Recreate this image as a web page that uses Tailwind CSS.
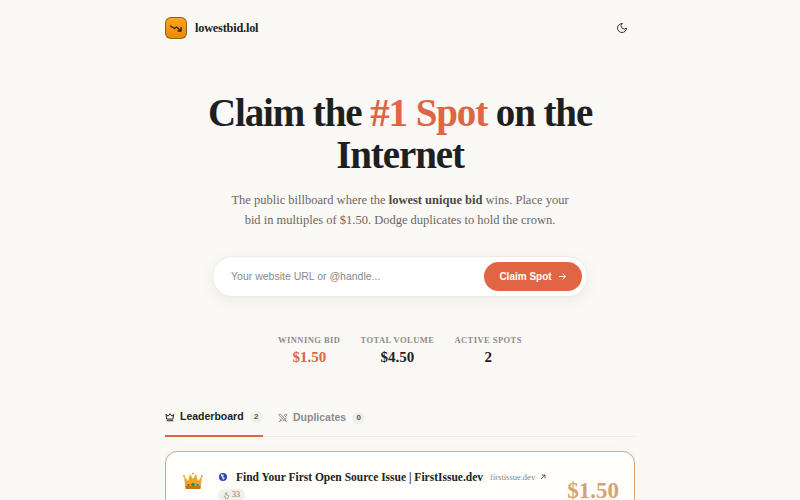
<!DOCTYPE html>
<html lang="en">
<head>
    <meta charset="UTF-8">
    <title>lowestbid.lol</title>
    <script src="https://cdn.jsdelivr.net/npm/@tailwindcss/browser@4"></script>
</head>
<body class="bg-[#faf9f6] font-['Liberation_Serif',serif] text-[#1f1f1f] h-[500px] overflow-hidden">
    <div class="w-[470px] mx-auto h-[500px] overflow-hidden">

        <!-- Header -->
        <header class="h-[55px] flex items-center justify-between">
            <div class="flex items-center gap-2">
                <div class="w-[22px] h-[22px] rounded-[6px] bg-gradient-to-b from-[#f8a51c] to-[#e98a0b] border border-[#3a2a10]/50 flex items-center justify-center">
                    <svg class="w-[16px] h-[16px]" viewBox="0 0 16 16" fill="none" stroke="#3a2508" stroke-width="1.4" stroke-linecap="round" stroke-linejoin="round"><path d="M2.5 6l4 2.500 2-1.500 4 3.500"/><path d="M13 7.500V11h-3"/></svg>
                </div>
                <span class="text-[12.3px] leading-[16px] font-bold tracking-[-0.2px] text-[#222]">lowestbid.lol</span>
            </div>
            <button class="mr-[7px] text-[#333]">
                <svg class="w-[12px] h-[12px]" viewBox="0 0 24 24" fill="none" stroke="currentColor" stroke-width="2" stroke-linecap="round" stroke-linejoin="round"><path d="M12 3a6 6 0 0 0 9 9 9 9 0 1 1-9-9Z"/></svg>
            </button>
        </header>

        <!-- Hero -->
        <section class="text-center">
            <h1 class="mt-[37px] -mx-[20px] text-[39px] leading-[42px] font-bold tracking-[-1.1px] text-[#1f1f1f]">Claim the <span class="text-[#e06545]">#1 Spot</span> on the Internet</h1>
            <p class="mt-[14px] text-[12.5px] leading-[20px] text-[#6b6660]">The public billboard where the <b class="text-[#4c4843]">lowest unique bid</b> wins. Place your<br>bid in multiples of $1.50. Dodge duplicates to hold the crown.</p>
        </section>

        <!-- Input -->
        <div class="mt-[26px] mx-[47px] h-[41px] rounded-full bg-white border border-[#eeeae4] shadow-[0_4px_14px_rgba(60,50,30,0.07)] flex items-center justify-between pl-[18px] pr-[5px] font-['Liberation_Sans',sans-serif]">
            <span class="text-[10.5px] text-[#8a8a8a]">Your website URL or @handle...</span>
            <button class="h-[29px] w-[98px] rounded-full bg-[#e06545] text-white text-[10px] font-bold flex items-center justify-center gap-[6px]">
                Claim Spot
                <svg class="w-[9px] h-[9px]" viewBox="0 0 24 24" fill="none" stroke="currentColor" stroke-width="2.500" stroke-linecap="round" stroke-linejoin="round"><path d="M4 12h16"/><path d="M13 5l7 7-7 7"/></svg>
            </button>
        </div>

        <!-- Stats -->
        <div class="mt-[37px] flex justify-center gap-[20px] text-center">
            <div>
                <div class="text-[8.5px] leading-[12px] font-bold tracking-[0.45px] text-[#8f8b85]">WINNING BID</div>
                <div class="mt-[2px] text-[15px] leading-[18px] font-bold text-[#e06545]">$1.50</div>
            </div>
            <div>
                <div class="text-[8.5px] leading-[12px] font-bold tracking-[0.45px] text-[#8f8b85]">TOTAL VOLUME</div>
                <div class="mt-[2px] text-[15px] leading-[18px] font-bold">$4.50</div>
            </div>
            <div>
                <div class="text-[8.5px] leading-[12px] font-bold tracking-[0.45px] text-[#8f8b85]">ACTIVE SPOTS</div>
                <div class="mt-[2px] text-[15px] leading-[18px] font-bold">2</div>
            </div>
        </div>

        <!-- Tabs -->
        <div class="mt-[34px] h-[37px] border-b border-[#efece6] flex font-['Liberation_Sans',sans-serif] text-[10.5px] font-bold">
            <div class="w-[98px] h-[37px] border-b-2 border-[#e06545] flex items-center pb-[2px] gap-[5px] text-[#222]">
                <svg class="w-[10px] h-[10px]" viewBox="0 0 24 24" fill="none" stroke="currentColor" stroke-width="2.400" stroke-linecap="round" stroke-linejoin="round"><path d="M3 6l4.500 4L12 4l4.500 6L21 6l-2 11H5Z"/><path d="M5 21h14"/></svg>
                <span>Leaderboard</span>
                <span class="ml-[1px] w-[13px] h-[12px] rounded-full bg-[#f1efea] text-[8px] leading-[12px] text-center text-[#555]">2</span>
            </div>
            <div class="ml-[15px] h-[36px] flex items-center pb-[1px] gap-[5px] text-[#8b8b8b]">
                <svg class="w-[10px] h-[10px]" viewBox="0 0 24 24" fill="none" stroke="currentColor" stroke-width="2.400" stroke-linecap="round" stroke-linejoin="round"><path d="M14.500 17.500L3 6V3h3l11.500 11.500"/><path d="M13 19l6-6"/><path d="M16 16l4 4"/><path d="M19 21l2-2"/><path d="M14.500 6.500L18 3h3v3l-3.500 3.500"/><path d="M5 14l4 4"/><path d="M7 17l-3 3"/><path d="M3 19l2 2"/></svg>
                <span>Duplicates</span>
                <span class="ml-[1px] w-[13px] h-[12px] rounded-full bg-[#f1efea] text-[8px] leading-[12px] text-center text-[#555]">0</span>
            </div>
        </div>

        <!-- Top card -->
        <div class="mt-[14px] h-[120px] rounded-[12px] border border-[#dca77a] bg-[#fffefb] flex pl-[17px] pr-[15px] shadow-[0_2px_8px_rgba(120,80,40,0.08)]">
            <svg class="w-[20px] h-[18px] mt-[20px] shrink-0" viewBox="0 0 20 18">
                <path d="M1 4l4 5 2-7 3 5 3-5 2 7 4-5-1.500 13H2.500Z" fill="#e8a72c"/>
                <path d="M2.400 14h15.200l-.3 3H2.700Z" fill="#b9791c"/>
                <circle cx="10" cy="12.500" r="1.800" fill="#1f8f6a"/>
                <circle cx="5.500" cy="13" r="1.100" fill="#b5342c"/>
                <circle cx="14.500" cy="13" r="1.100" fill="#3a62b8"/>
                <circle cx="1" cy="4" r="1" fill="#e8a72c"/><circle cx="19" cy="4" r="1" fill="#e8a72c"/><circle cx="10" cy="1.500" r="1" fill="#e8a72c"/>
            </svg>
            <div class="ml-[15px] flex-1 min-w-0">
                <div class="mt-[18px] flex items-center h-[14px]">
                    <svg class="w-[10px] h-[10px] shrink-0" viewBox="0 0 10 10"><circle cx="5" cy="5" r="4" fill="#2c46b8"/><path d="M3 2l3 1-1 2 2 1-2 2-1-3-1-1Z" fill="#dfe6f7"/></svg>
                    <span class="ml-[8px] text-[11.5px] leading-[14px] font-bold whitespace-nowrap text-[#222]">Find Your First Open Source Issue | FirstIssue.dev</span>
                    <span class="ml-[7px] text-[8.5px] leading-[14px] text-[#8a857e]">firstissue.dev</span>
                    <svg class="ml-[4px] w-[8px] h-[8px] text-[#444]" viewBox="0 0 24 24" fill="none" stroke="currentColor" stroke-width="2.500"><path d="M6 18L18 6"/><path d="M8 6h10v10"/></svg>
                </div>
                <div class="mt-[5px] flex items-start justify-between">
                    <div class="h-[12px] w-[27px] rounded-full bg-[#f1efea] flex items-center justify-center gap-[2px] text-[8px] text-[#77736d]">
                        <svg class="w-[7px] h-[7px]" viewBox="0 0 24 24" fill="none" stroke="currentColor" stroke-width="2"><path d="M9 11V4a2 2 0 0 1 4 0v7l6 2v4l-3 5H9l-5-7 2-1 3 2"/></svg>
                        33
                    </div>
                    <span class="-mt-[13px] text-[23px] leading-[30px] font-bold text-[#d6a378]">$1.50</span>
                </div>
            </div>
        </div>
    </div>
</body>
</html>
